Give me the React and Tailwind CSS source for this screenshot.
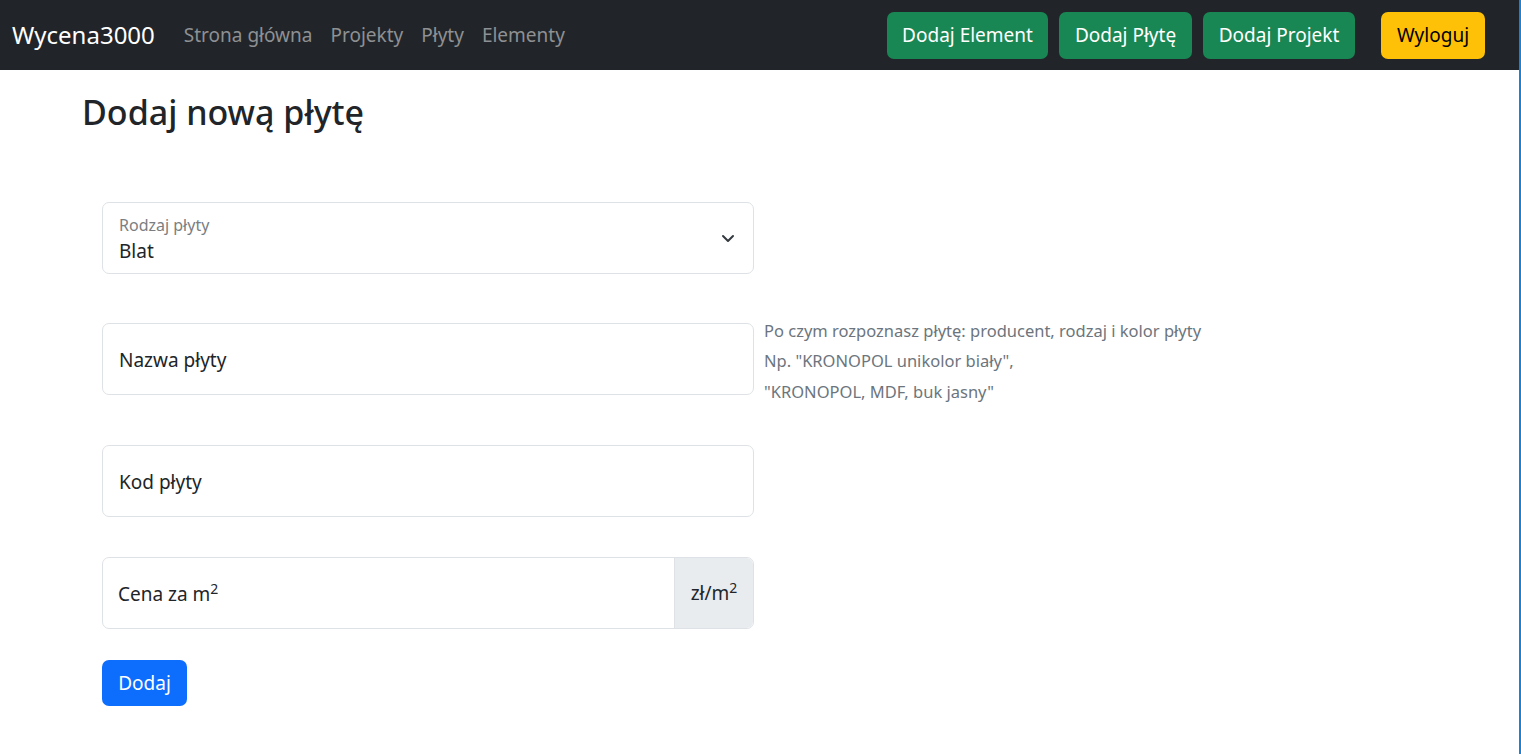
import React from "react";

const font = { fontFamily: '"Noto Sans", "Open Sans", sans-serif' };

const NavButton = ({ children, className }) => (
  <button
    className={
      "h-[47px] rounded-[7px] whitespace-nowrap text-[19px] leading-none flex items-center justify-center " +
      className
    }
  >
    {children}
  </button>
);

const App = () => {
  return (
    <div
      className="min-h-[754px] bg-white border-r-2 border-[#1683d8] text-[#212529]"
      style={font}
    >
      {/* navbar */}
      <nav className="h-[70px] bg-[#212529] flex items-center pl-[12px] pr-[34px]">
        <span className="text-[24px] text-white mr-[29px]">Wycena3000</span>
        <div className="flex items-center gap-[18px] text-[19px] text-[#8e9093]">
          <span>Strona główna</span>
          <span>Projekty</span>
          <span>Płyty</span>
          <span>Elementy</span>
        </div>
        <div className="ml-auto flex items-center">
          <NavButton className="bg-[#198754] text-white w-[161px]">Dodaj Element</NavButton>
          <NavButton className="bg-[#198754] text-white w-[133px] ml-[11px]">Dodaj Płytę</NavButton>
          <NavButton className="bg-[#198754] text-white w-[152px] ml-[11px]">Dodaj Projekt</NavButton>
          <NavButton className="bg-[#ffc107] text-black w-[104px] ml-[26px]">Wyloguj</NavButton>
        </div>
      </nav>

      <main className="pl-[82px] pt-[22px]">
        <h2 className="text-[34px] font-medium leading-[1.2]">Dodaj nową płytę</h2>

        <div className="pl-[20px] mt-[69px] flex flex-col">
          {/* select */}
          <div className="w-[652px] h-[72px] border border-[#dee2e6] rounded-[7px] relative pl-[16px] pt-[11px]">
            <div className="text-[16px] text-[#7b7e81] leading-[22px]">Rodzaj płyty</div>
            <div className="text-[19px] leading-[30px]">Blat</div>
            <svg
              className="absolute right-[18px] top-[30px]"
              width="14"
              height="10"
              viewBox="0 0 14 10"
              fill="none"
              stroke="#343a40"
              strokeWidth="2"
              strokeLinecap="round"
              strokeLinejoin="round"
            >
              <path d="M2 3l5 5 5-5" />
            </svg>
          </div>

          {/* nazwa */}
          <div className="flex items-start h-[72px] mt-[49px]">
            <div className="w-[652px] h-[72px] shrink-0 border border-[#dee2e6] rounded-[7px] flex items-center pl-[16px] pt-[3px] text-[19px]">
              Nazwa płyty
            </div>
            <div className="ml-[10px] -mt-[7px] text-[16.5px] leading-[30.5px] text-[#6c757d] whitespace-nowrap">
              <div>Po czym rozpoznasz płytę: producent, rodzaj i kolor płyty</div>
              <div>Np. "KRONOPOL unikolor biały",</div>
              <div>"KRONOPOL, MDF, buk jasny"</div>
            </div>
          </div>

          {/* kod */}
          <div className="w-[652px] h-[72px] mt-[50px] border border-[#dee2e6] rounded-[7px] flex items-center pl-[16px] pt-[2px] text-[19px]">
            Kod płyty
          </div>

          {/* cena */}
          <div className="w-[652px] h-[72px] mt-[40px] border border-[#dee2e6] rounded-[7px] flex overflow-hidden">
            <div className="flex-1 flex items-center pl-[15px] pt-[3px] text-[19px]">
              <span>
                Cena za m<sup className="text-[14px]">2</sup>
              </span>
            </div>
            <div className="w-[79px] bg-[#e9ecef] border-l border-[#dee2e6] flex items-center justify-center text-[19px]">
              <span>
                zł/m<sup className="text-[14px]">2</sup>
              </span>
            </div>
          </div>

          <button className="mt-[31px] w-[85px] h-[46px] rounded-[7px] bg-[#0d6efd] text-white text-[19px]">
            Dodaj
          </button>
        </div>
      </main>
    </div>
  );
};

export default App;
